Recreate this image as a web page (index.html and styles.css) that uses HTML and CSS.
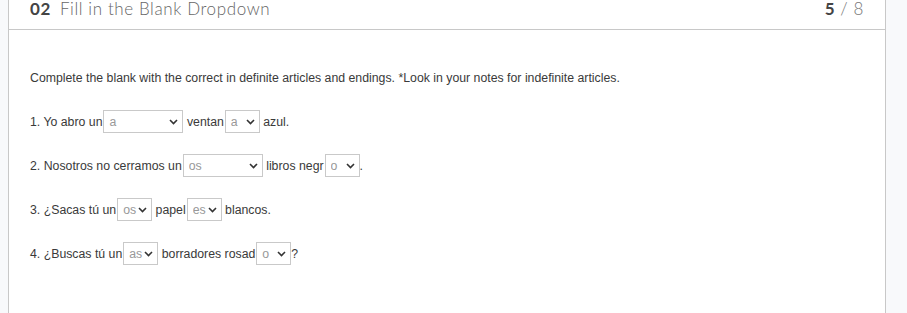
FILE: index.html
```html
<!DOCTYPE html>
<html lang="es">
<head>
  <meta charset="UTF-8" />
  <title>Fill in the Blank Dropdown</title>
  <link rel="stylesheet" href="styles.css">
</head>
<body>
  <div class="card">
    <div class="card-head">
      <span class="num">02</span>
      <span class="title">Fill in the Blank Dropdown</span>
      <span class="score"><b>5</b> / 8</span>
    </div>
    <div class="card-body">
      <p class="intro">Complete the blank with the correct in definite articles and endings. *Look in your notes for indefinite articles.</p>
      <p class="line">1. Yo abro un<select class="wide"><option>a</option></select> ventan<select class="narrow"><option>a</option></select> azul.</p>
      <p class="line">2. Nosotros no cerramos un<select class="wide"><option>os</option></select> libros negr<select class="narrow"><option>o</option></select>.</p>
      <p class="line">3. ¿Sacas tú un<select class="narrow"><option>os</option></select> papel<select class="narrow"><option>es</option></select> blancos.</p>
      <p class="line">4. ¿Buscas tú un<select class="narrow"><option>as</option></select> borradores rosad<select class="narrow"><option>o</option></select>?</p>
    </div>
  </div>
</body>
</html>
```

FILE: styles.css
```css
/* Page */
body {
  margin: 0;
  background-color: #f8f9fb;
  font-family: 'Liberation Sans', Arial, sans-serif;
  color: #333;
  overflow: hidden;
}
.card {
  margin-left: 8px;
  width: 876px;
  height: 400px;
  background-color: #fff;
  border-left: 1px solid #c8c8c8;
  border-right: 1px solid #c8c8c8;
}

/* Header */
.card-head {
  display: flex;
  align-items: flex-start;
  height: 29px;
  padding: 0 20px 0 21px;
  border-bottom: 1px solid #c8c8c8;
  font-family: 'Lato', 'Open Sans', sans-serif;
  font-size: 17px;
  line-height: 17px;
  letter-spacing: 0.6px;
  color: #666;
}
.card-head .num {
  font-weight: 700;
  color: #444;
  margin-right: 9px;
}
.card-head .title {
  font-weight: 300;
  flex: 1;
}
.card-head .score {
  font-weight: 300;
  color: #777;
  margin-right: 1px;
}
.card-head .score b {
  font-weight: 700;
  color: #444;
}

/* Body */
.card-body {
  padding: 37px 21px 0 21px;
  font-size: 12.3px;
  color: #3a3a3a;
}
.card-body p {
  margin: 0 0 22px 0;
  height: 22px;
  line-height: 22px;
  white-space: nowrap;
}
.card-body select {
  -webkit-appearance: none;
  appearance: none;
  height: 23px;
  margin: 0 0 0 1px;
  padding: 0 0 0 5px;
  vertical-align: middle;
  border: 1px solid #c9c9c9;
  border-radius: 0;
  background-color: #fff;
  background-image: url("data:image/svg+xml;utf8,<svg xmlns='http://www.w3.org/2000/svg' width='9' height='6' viewBox='0 0 9 6'><path d='M1 1l3.5 3.5L8 1' fill='none' stroke='%23333' stroke-width='1.6'/></svg>");
  background-repeat: no-repeat;
  background-position: right 4px center;
  font-family: 'Liberation Sans', Arial, sans-serif;
  font-size: 12.3px;
  color: #999;
  position: relative;
  top: -1px;
}
.card-body select.wide { width: 80px; }
.card-body select.narrow { width: 35px; }
```
